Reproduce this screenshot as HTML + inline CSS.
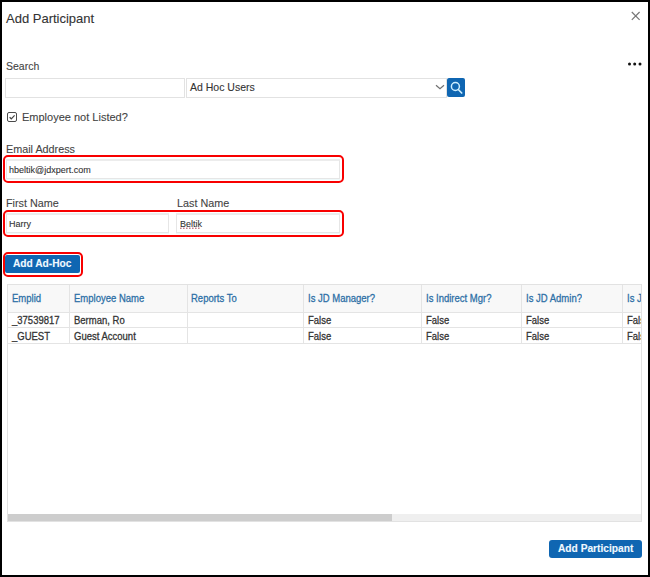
<!DOCTYPE html>
<html><head><meta charset="utf-8">
<style>
*{box-sizing:border-box;margin:0;padding:0}
html,body{width:650px;height:577px;overflow:hidden;background:#000}
body{position:relative;font-family:"Liberation Sans",sans-serif}
.t{-webkit-text-stroke:0.1px currentColor}
.hd,.cell{-webkit-text-stroke:0.25px currentColor}
#frame{position:absolute;left:2px;top:2px;width:646px;height:573px;background:#fff}
.t{position:absolute;white-space:nowrap;line-height:1}
.lbl{color:#444;font-size:10.8px}
.inp{position:absolute;border:1px solid #e2e2e2;background:#fff}
.fi{border-color:#e6e6e6;border-top:2px solid #ececec;box-shadow:0 1px 0 #eef9fa}
.red{position:absolute;border:2px solid #f80000;border-radius:5px}
.btn{position:absolute;background:#0f66b2;border-radius:2px}
.g{position:absolute;background:#e4e4e4}
.hd{color:#2c6fa6;font-size:9.5px;transform:scaleY(1.12);transform-origin:0 80%}
.cell{color:#333;font-size:9.5px;transform:scaleY(1.12);transform-origin:0 80%}
</style></head><body>
<div id="frame"></div>

<!-- title -->
<div class="t" style="left:6px;top:11.6px;font-size:13px;color:#333">Add Participant</div>
<svg style="position:absolute;left:631px;top:11px" width="10" height="10" viewBox="0 0 10 10"><path d="M0.8 1L8.6 8.8M8.6 1L0.8 8.8" stroke="#777" stroke-width="1.2" fill="none"/></svg>

<!-- search -->
<div class="t lbl" style="left:6px;top:60.8px;font-size:10.5px">Search</div>
<svg style="position:absolute;left:626px;top:61px" width="16" height="6" viewBox="0 0 16 6"><circle cx="3.5" cy="3" r="1.5" fill="#111"/><circle cx="8.7" cy="3" r="1.5" fill="#111"/><circle cx="14" cy="3" r="1.5" fill="#111"/></svg>
<div class="inp" style="left:5px;top:77.5px;width:180px;height:20px"></div>
<div class="inp" style="left:186px;top:77.5px;width:261px;height:20px"></div>
<div class="t lbl" style="left:190px;top:82.1px;font-size:10.5px;color:#333">Ad Hoc Users</div>
<svg style="position:absolute;left:435px;top:84.3px" width="10" height="6" viewBox="0 0 10 6"><path d="M1 1.3L5 4.8L9 1.3" stroke="#707070" stroke-width="1.2" fill="none"/></svg>
<div class="btn" style="left:447px;top:78px;width:18px;height:19px"></div>
<svg style="position:absolute;left:447px;top:78px" width="18" height="19" viewBox="0 0 18 19"><circle cx="8.4" cy="8.5" r="4" stroke="#cdeeff" stroke-width="1.5" fill="none"/><path d="M11.3 11.5L14.7 15" stroke="#cdeeff" stroke-width="1.7" stroke-linecap="round" fill="none"/></svg>

<!-- checkbox -->
<div style="position:absolute;left:6.8px;top:111.8px;width:10.2px;height:10.2px;border:1.3px solid #4a4a4a;border-radius:2px"></div>
<svg style="position:absolute;left:7px;top:112px" width="10" height="10" viewBox="0 0 10 10"><path d="M2.6 5.2L4.3 6.8L7.6 3.4" stroke="#444" stroke-width="1.2" fill="none"/></svg>
<div class="t lbl" style="left:22px;top:111.5px;font-size:11px">Employee not Listed?</div>

<!-- email -->
<div class="t lbl" style="left:6px;top:143.7px">Email Address</div>
<div class="red" style="left:3px;top:155px;width:341px;height:28px"></div>
<div class="inp fi" style="left:6px;top:159px;width:334px;height:20px"></div>
<div class="t" style="left:9px;top:166px;font-size:9px;color:#333">hbeltik@jdxpert.com</div>

<!-- names -->
<div class="t lbl" style="left:6px;top:197.8px">First Name</div>
<div class="t lbl" style="left:177px;top:197.8px">Last Name</div>
<div class="red" style="left:3px;top:210px;width:341px;height:27px"></div>
<div class="inp fi" style="left:6px;top:213px;width:163px;height:20px"></div>
<div class="inp fi" style="left:176px;top:213px;width:164px;height:20px"></div>
<div class="t" style="left:9px;top:220.3px;font-size:9px;color:#333">Harry</div>
<div class="t" style="left:180px;top:220.3px;font-size:9px;color:#333">Beltik</div>
<svg style="position:absolute;left:180px;top:227px" width="22" height="3" viewBox="0 0 22 3"><path d="M0 1.2L21 1.2" stroke="#a84a5a" stroke-width="1" stroke-dasharray="1.6 1.4" fill="none"/></svg>

<!-- add ad-hoc -->
<div class="red" style="left:3px;top:252px;width:80px;height:25px;border-width:2px;border-radius:5px"></div>
<div class="btn" style="left:5px;top:255px;width:74.5px;height:18px;border-radius:2px"></div>
<div class="t" style="left:13px;top:259.3px;font-size:10.2px;font-weight:bold;color:#f0f9ff">Add Ad-Hoc</div>

<!-- grid -->
<div style="position:absolute;left:7px;top:284px;width:635px;height:238px;border:1px solid #e2e2e2;background:#fff"></div>
<div style="position:absolute;left:8px;top:285px;width:633px;height:27px;background:#f8f8f8"></div>
<div class="g" style="left:8px;top:312px;width:633px;height:1px"></div>
<div class="g" style="left:8px;top:327px;width:633px;height:1px"></div>
<div class="g" style="left:8px;top:343px;width:633px;height:1px"></div>
<div class="g" style="left:69px;top:285px;width:1px;height:58px"></div>
<div class="g" style="left:187px;top:285px;width:1px;height:58px"></div>
<div class="g" style="left:303px;top:285px;width:1px;height:58px"></div>
<div class="g" style="left:421px;top:285px;width:1px;height:58px"></div>
<div class="g" style="left:521px;top:285px;width:1px;height:58px"></div>
<div class="g" style="left:622px;top:285px;width:1px;height:58px"></div>

<div class="t hd" style="left:12px;top:294px">Emplid</div>
<div class="t hd" style="left:74px;top:294px">Employee Name</div>
<div class="t hd" style="left:191px;top:294px">Reports To</div>
<div class="t hd" style="left:308px;top:294px">Is JD Manager?</div>
<div class="t hd" style="left:426px;top:294px">Is Indirect Mgr?</div>
<div class="t hd" style="left:526px;top:294px">Is JD Admin?</div>
<div style="position:absolute;left:623px;top:285px;width:18px;height:58px;overflow:hidden">
<div class="t hd" style="left:4px;top:9px">Is JD</div>
<div class="t cell" style="left:4px;top:31px">False</div>
<div class="t cell" style="left:4px;top:47px">False</div>
</div>

<div class="t cell" style="left:12px;top:316px">_37539817</div>
<div class="t cell" style="left:74px;top:316px">Berman, Ro</div>
<div class="t cell" style="left:308px;top:316px">False</div>
<div class="t cell" style="left:426px;top:316px">False</div>
<div class="t cell" style="left:526px;top:316px">False</div>

<div class="t cell" style="left:12px;top:332px">_GUEST</div>
<div class="t cell" style="left:74px;top:332px">Guest Account</div>
<div class="t cell" style="left:308px;top:332px">False</div>
<div class="t cell" style="left:426px;top:332px">False</div>
<div class="t cell" style="left:526px;top:332px">False</div>

<!-- scrollbar -->
<div style="position:absolute;left:8px;top:514px;width:633px;height:7px;background:#efefef"></div>
<div style="position:absolute;left:8px;top:514px;width:384px;height:7px;background:#cdcdcd"></div>

<!-- footer -->
<div class="btn" style="left:549px;top:540px;width:93px;height:18px;border-radius:3px"></div>
<div class="t" style="left:558px;top:543.5px;font-size:10.2px;font-weight:bold;color:#f0f9ff">Add Participant</div>

</body></html>
